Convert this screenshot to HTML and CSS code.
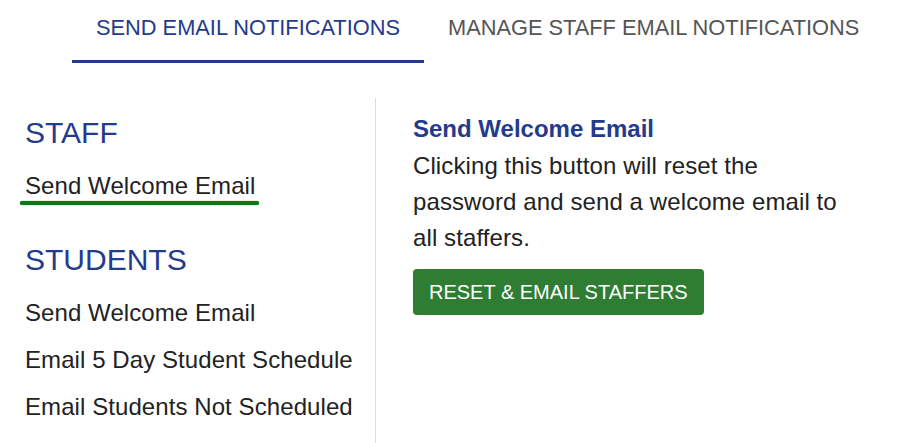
FILE: index.html
```html
<!DOCTYPE html>
<html lang="en">
<head>
<meta charset="utf-8">
<title>Email Notifications</title>
<link rel="stylesheet" href="styles.css">
</head>
<body>
<nav class="tabs">
  <a class="tab tab-active">SEND EMAIL NOTIFICATIONS</a>
  <a class="tab">MANAGE STAFF EMAIL NOTIFICATIONS</a>
</nav>
<main class="main">
  <aside class="sidebar">
    <section class="group">
      <h2 class="group-title">STAFF</h2>
      <ul class="group-list">
        <li class="group-item item-active">Send Welcome Email</li>
      </ul>
    </section>
    <section class="group">
      <h2 class="group-title">STUDENTS</h2>
      <ul class="group-list">
        <li class="group-item">Send Welcome Email</li>
        <li class="group-item">Email 5 Day Student Schedule</li>
        <li class="group-item">Email Students Not Scheduled</li>
      </ul>
    </section>
  </aside>
  <section class="detail">
    <h3 class="detail-title">Send Welcome Email</h3>
    <p class="detail-text">Clicking this button will reset the password and send a welcome email to all staffers.</p>
    <button class="btn-primary" type="button">RESET &amp; EMAIL STAFFERS</button>
  </section>
</main>
</body>
</html>
```
FILE: styles.css
```css
html, body {
  margin: 0;
  padding: 0;
  background: #ffffff;
  overflow: hidden;
}

body {
  font-family: "Liberation Sans", Arial, Helvetica, sans-serif;
  color: #222222;
}

.tabs {
  display: flex;
  padding-left: 72px;
}

.tab {
  display: block;
  padding: 15px 24px 20px;
  font-size: 21.8px;
  line-height: 25px;
  color: #555555;
  border-bottom: 3px solid transparent;
  white-space: nowrap;
}

.tab-active {
  color: #243a8c;
  border-bottom-color: #243a8c;
}

.main {
  display: flex;
  margin-top: 35px;
  height: calc(100vh - 98px);
}

.sidebar {
  width: 376px;
  flex: none;
  box-sizing: border-box;
  padding: 17px 0 0 25px;
  border-right: 1px solid #dddddd;
}

.group {
  margin-bottom: 38px;
}

.group-title {
  margin: 0 0 17px;
  font-size: 30px;
  line-height: 36px;
  font-weight: normal;
  color: #243a8c;
}

.group-list {
  list-style: none;
  margin: 0;
  padding: 0;
  display: flex;
  flex-direction: column;
  gap: 11px;
}

.group-item {
  font-size: 24px;
  line-height: 36px;
  letter-spacing: 0.08px;
  color: #222222;
  white-space: nowrap;
}

.item-active {
  position: relative;
  display: inline-block;
  align-self: flex-start;
}

.item-active::after {
  content: "";
  position: absolute;
  left: -5px;
  right: -4px;
  bottom: -1px;
  height: 4px;
  border-radius: 2px;
  background: #0b7a16;
  box-shadow: 0 0 1px #0b7a16;
}

.detail {
  padding: 13px 0 0 37px;
}

.detail-title {
  margin: 0;
  font-size: 24px;
  line-height: 36px;
  font-weight: bold;
  color: #243a8c;
}

.detail-text {
  margin: 1px 0 13px;
  width: 440px;
  font-size: 24px;
  line-height: 36px;
  letter-spacing: 0.1px;
  color: #222222;
}

.btn-primary {
  display: block;
  height: 46px;
  padding: 0 16px;
  border: none;
  border-radius: 4px;
  background: #2e7d32;
  color: #ffffff;
  font-family: "Liberation Sans", Arial, Helvetica, sans-serif;
  font-size: 20px;
  line-height: 46px;
}
```
